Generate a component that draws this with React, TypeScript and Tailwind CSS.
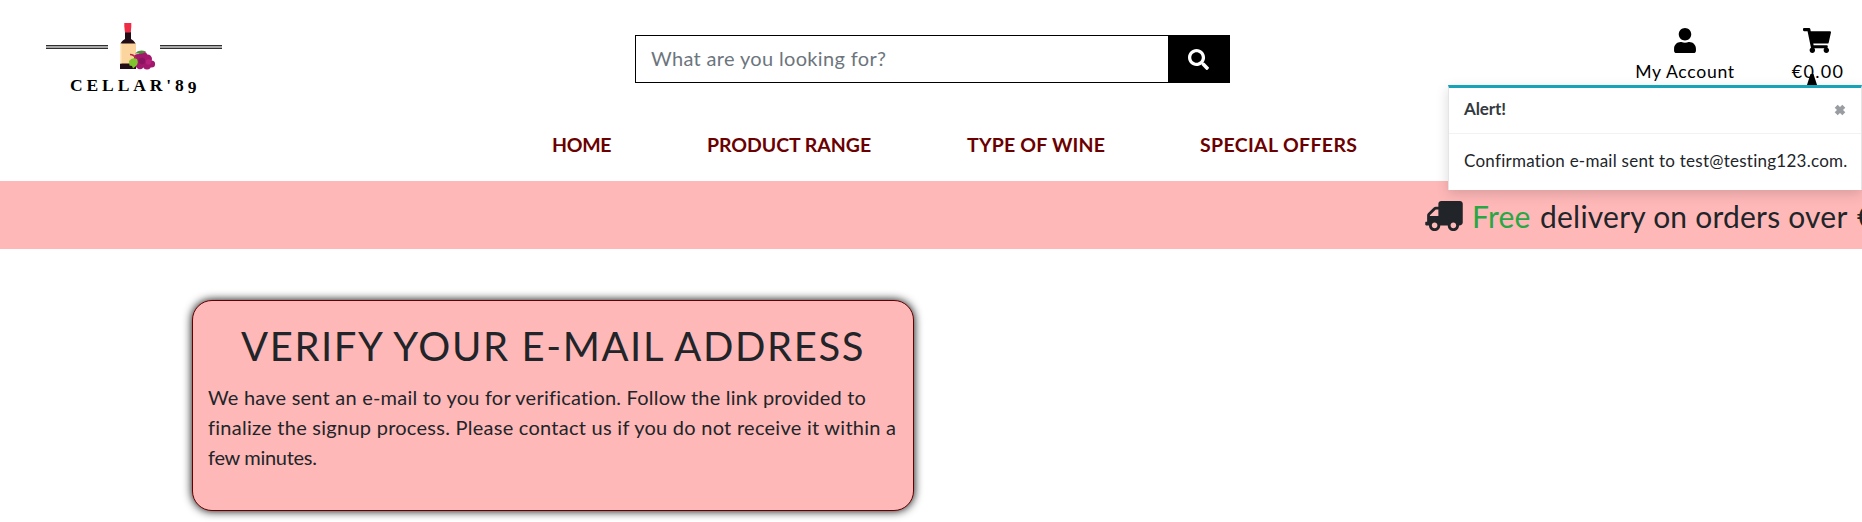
import { FaSearch, FaShoppingCart, FaTruck, FaUser } from "react-icons/fa";

function Rule() {
  return <div className="mt-[31px] h-1 w-[62px] border-y border-[#303030] bg-[#a9a9a9]" />;
}

function Bottle() {
  return (
    <svg className="ml-2 mt-[9px] h-[47px] w-[36px]" viewBox="0 0 36 47">
      <path d="M5 9h6v7q5 3 5 7v23H0V23q0-4 5-7Z" fill="#220d17" />
      <path d="M4.3 0h7v3.5l-.5 6H5l-.7-6Z" fill="#f02c45" />
      <path d="M0 20.500h16v20H0Z" fill="#fbd59d" />
      <path d="M0 20.500h1.500v20H0Z" fill="#ffe9c6" />
      <g fill="#a3186c">
        <circle cx="18" cy="35" r="4" />
        <circle cx="23" cy="33" r="4.500" />
        <circle cx="27.500" cy="36" r="4.500" />
        <circle cx="31.500" cy="41" r="3.600" />
        <circle cx="27" cy="42.500" r="4" />
        <circle cx="20" cy="42" r="4.300" />
      </g>
      <circle cx="22" cy="38" r="3.200" fill="#8a145f" />
      <circle cx="28.500" cy="39" r="2.800" fill="#b5217b" />
      <path d="M15 30.500q4-5 11-2q-3 3-8 2Z" fill="#4f8b3b" />
      <path d="M10 31.500q4 0 6 4" fill="none" stroke="#b52b48" strokeWidth="1.500" />
      <path d="M9 38q3-4 8-2q2 4-1 7l-3 2.500l-1-2.500l-2.500-.5Z" fill="#80c32d" />
    </svg>
  );
}

function Logo() {
  return (
    <a className="ml-[46px] mt-[14px] flex w-[176px] flex-col">
      <div className="flex h-[61px] justify-between">
        <Rule />
        <Bottle />
        <Rule />
      </div>
      <div className="ml-6 whitespace-nowrap font-['Liberation_Serif',serif] text-[17.500px] font-bold leading-5 tracking-[3.9px] text-black">
        CELLAR'8<span className="relative top-[2px]">9</span>
      </div>
    </a>
  );
}

function Toast() {
  return (
    <div className="absolute left-[1448px] top-[85px] h-[105px] w-[414px] border-x border-t-[3px] border-x-black/10 border-t-[#17a2b8] bg-white shadow-[0_4px_12px_rgba(0,0,0,0.15)]">
      <div className="flex h-[46px] items-start justify-between border-b border-black/5 pl-[15px] pr-[15px]">
        <strong className="mt-[8px] text-[17px] font-bold leading-[26px] tracking-[-0.1px] text-[#343a40]">Alert!</strong>
        <svg className="mt-[16px] h-[12px] w-[12px]" viewBox="0 0 12 12">
          <path d="M2.200 2.200l7.600 7.600M9.800 2.200l-7.600 7.600" stroke="#999da1" strokeWidth="4.200" />
        </svg>
      </div>
      <p className="ml-[15px] mt-[14px] whitespace-nowrap text-[17px] leading-[26px] tracking-[0.25px] text-[#212529]">
        Confirmation e-mail sent to test@testing123.com.
      </p>
    </div>
  );
}

export default function App() {
  return (
    <div className="relative h-[522px] w-full overflow-hidden bg-white font-['Lato',sans-serif] text-[#212529]">
      <header className="h-[181px]">
        <div className="flex h-[120px]">
          <Logo />
          <form className="ml-[413px] mt-[35px] flex h-[48px] w-[595px] border border-black">
            <input
              className="h-full min-w-0 flex-1 bg-white pb-[2px] pl-[15px] text-[20px] tracking-[0.34px] outline-none placeholder:text-[#6c757d]"
              placeholder="What are you looking for?"
            />
            <button type="button" className="flex w-[61px] items-center justify-center bg-black text-white">
              <FaSearch className="h-[21px] w-[21px]" />
            </button>
          </form>
          <a className="ml-[405px] mt-[28px] flex w-[100px] flex-col items-center text-black">
            <FaUser className="h-[25px] w-[22px]" />
            <span className="mt-[6px] whitespace-nowrap text-[17.600px] leading-[26px] tracking-[0.7px]">My Account</span>
          </a>
          <a className="ml-[56px] mt-[28px] flex w-[52px] flex-col items-center text-black">
            <FaShoppingCart className="h-[25px] w-[28px]" />
            <span className="mt-[5px] whitespace-nowrap pl-[2px] text-[18px] leading-[26px] tracking-[1.3px]">€0.00</span>
          </a>
        </div>
        <nav className="ml-[552px] flex h-[50px] items-center whitespace-nowrap text-[19.500px] font-bold leading-[30px] text-[#6b0000]">
          <a className="w-[155px] tracking-[-0.3px]">HOME</a>
          <a className="w-[260px] tracking-[-0.05px]">PRODUCT RANGE</a>
          <a className="w-[233px] tracking-[0.2px]">TYPE OF WINE</a>
          <a className="tracking-[0.35px]">SPECIAL OFFERS</a>
        </nav>
      </header>

      <div className="flex h-[68px] overflow-hidden whitespace-nowrap bg-[#ffb8b8] pl-[1425px] text-[30px] leading-[45px]">
        <FaTruck className="mt-[20px] h-[30px] w-[38px] shrink-0 -scale-x-100" />
        <span className="ml-[9px] mt-[13px] w-[68px] shrink-0 tracking-[0.2px] text-[#28a745]">Free</span>
        <span className="mt-[13px] w-[317px] shrink-0 tracking-[0.22px]">delivery on orders over</span>
        <span className="mt-[13px] shrink-0">€50</span>
      </div>

      <main className="pl-48 pt-[51px]">
        <section className="h-[211px] w-[722px] rounded-[20px] border border-[#660000] bg-[#ffb8b8] px-4 pt-[21px] shadow-[0_0_10px_#000]">
          <h1 className="whitespace-nowrap text-center text-[40px] font-normal leading-[48px] tracking-[1.6px]">VERIFY YOUR E-MAIL ADDRESS</h1>
          <p className="-ml-px mt-[12px] whitespace-nowrap text-[20px] leading-[30px] tracking-[0.22px]">
            We have sent an e-mail to you for verification. Follow the link provided to
            <br />
            <span className="tracking-[0.260px]">finalize the signup process. Please contact us if you do not receive it within a</span>
            <br />
            <span className="tracking-[-0.3px]">few minutes.</span>
          </p>
        </section>
      </main>

      <svg className="absolute left-[1807px] top-[74px] h-[11px] w-[10px]" viewBox="0 0 10 11">
        <path d="M3.500 0h3l3.500 11H0Z" />
      </svg>
      <Toast />
    </div>
  );
}
